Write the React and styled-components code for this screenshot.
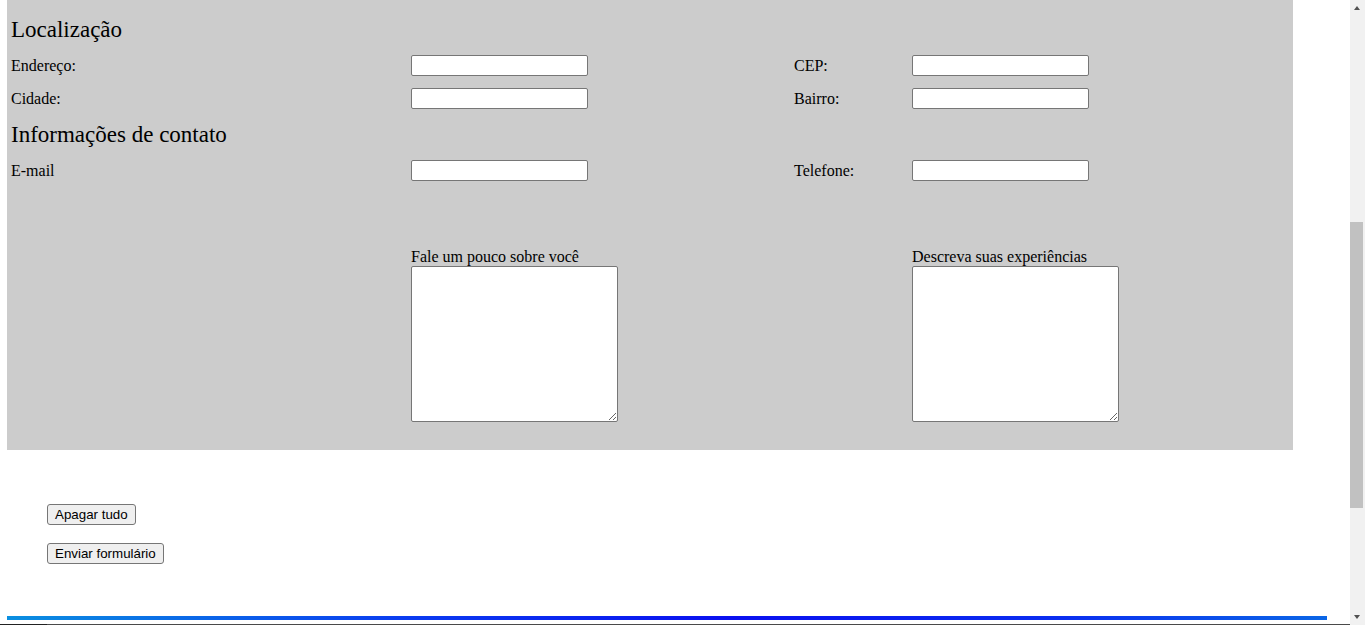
import React from "react"
import styled, { createGlobalStyle } from "styled-components"

const GlobalStyle = createGlobalStyle`
  body {
    margin: 0;
    background: #ffffff;
    font-family: "Liberation Serif", "Times New Roman", serif;
    font-size: 16px;
    color: #000;
  }
`

const Page = styled.div`
  padding-left: 7px;
`

const FormSection = styled.section`
  width: 1286px;
  box-sizing: border-box;
  background: #cccccc;
  padding: 16px 0 28px 4px;
  display: flex;
  flex-direction: column;
  gap: 12px;
`

const SectionTitle = styled.h2`
  margin: 1px 0 0;
  font-size: 23px;
  font-weight: normal;
  line-height: 26px;
`

const Row = styled.div`
  display: grid;
  grid-template-columns: 400px 383px 118px 1fr;
  align-items: ${p => (p.$top ? "start" : "center")};
  margin-top: ${p => p.$offset || 0}px;
`

const Label = styled.label`
  line-height: 18px;
`

const TextInput = styled.input`
  box-sizing: border-box;
  width: 177px;
  height: 21px;
  padding: 1px 2px;
  border: 1px solid #767676;
  border-radius: 2px;
  background: #fff;
  font: 13.33px "Liberation Sans", Arial, sans-serif;
`

const Field = styled.div`
  grid-column: ${p => p.$col};
  display: flex;
  flex-direction: column;
  align-items: flex-start;
`

const TextArea = styled.textarea`
  display: block;
  box-sizing: border-box;
  width: 207px;
  height: 156px;
  padding: 2px;
  border: 1px solid #767676;
  border-radius: 2px;
  background: #fff;
  font: 13.33px "Liberation Mono", monospace;
`

const Actions = styled.div`
  margin-top: 54px;
  padding-left: 40px;
  display: flex;
  flex-direction: column;
  align-items: flex-start;
  gap: 18px;
`

const Button = styled.button`
  box-sizing: border-box;
  height: 21px;
  padding: 0 7px;
  border: 1px solid #767676;
  border-radius: 3px;
  background: #efefef;
  color: #000;
  font: 13.33px "Liberation Sans", Arial, sans-serif;
  line-height: 19px;
`

const Divider = styled.div`
  margin-top: 52px;
  width: 1320px;
  height: 4px;
  background: linear-gradient(90deg, #0a8fe0 0%, #0a3cf0 30%, #0a10f0 55%, #0a2ef0 80%, #0a66e6 100%);
`

const Footer = styled.footer`
  margin-top: 4px;
  margin-left: -7px;
  height: 220px;
  background: linear-gradient(90deg, #222 0 47px, #4a4a4a 47px);
`

// stand-in for the browser scrollbar seen in the screenshot
const ScrollTrack = styled.div`
  position: fixed;
  top: 0;
  right: 0;
  width: 15px;
  height: 100vh;
  background: #f1f1f1;
`

const ScrollArrow = styled.div`
  position: absolute;
  left: 4px;
  ${p => (p.$down ? "bottom: 6px;" : "top: 6px;")}
  width: 0;
  height: 0;
  border-left: 3.5px solid transparent;
  border-right: 3.5px solid transparent;
  ${p =>
    p.$down
      ? "border-top: 4px solid #505050;"
      : "border-bottom: 4px solid #505050;"}
`

const ScrollThumb = styled.div`
  position: absolute;
  top: 222px;
  left: 0;
  width: 13px;
  height: 286px;
  background: #c1c1c1;
`

export default function App() {
  return (
    <>
      <GlobalStyle />
      <Page>
        <FormSection>
          <SectionTitle>Localização</SectionTitle>
          <Row>
            <Label>Endereço:</Label>
            <TextInput type="text" />
            <Label>CEP:</Label>
            <TextInput type="text" />
          </Row>
          <Row>
            <Label>Cidade:</Label>
            <TextInput type="text" />
            <Label>Bairro:</Label>
            <TextInput type="text" />
          </Row>
          <SectionTitle>Informações de contato</SectionTitle>
          <Row>
            <Label>E-mail</Label>
            <TextInput type="email" />
            <Label>Telefone:</Label>
            <TextInput type="tel" />
          </Row>
          <Row $top $offset={55}>
            <Field $col={2}>
              <Label>Fale um pouco sobre você</Label>
              <TextArea />
            </Field>
            <Field $col={4}>
              <Label>Descreva suas experiências</Label>
              <TextArea />
            </Field>
          </Row>
        </FormSection>
        <Actions>
          <Button type="reset">Apagar tudo</Button>
          <Button type="submit">Enviar formulário</Button>
        </Actions>
        <Divider />
        <Footer />
      </Page>
      <ScrollTrack>
        <ScrollArrow />
        <ScrollThumb />
        <ScrollArrow $down />
      </ScrollTrack>
    </>
  )
}
